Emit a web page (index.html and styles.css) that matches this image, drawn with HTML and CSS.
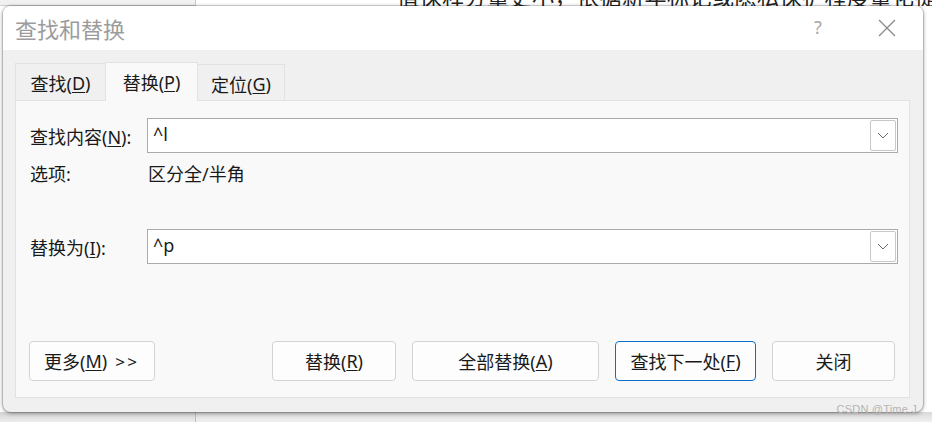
FILE: index.html
```html
<!DOCTYPE html>
<html lang="zh">
<head>
<meta charset="utf-8">
<title>查找和替换</title>
<link rel="stylesheet" href="styles.css">
</head>
<body>
<div class="page">
  <div class="strip top-strip">
    <div class="side"></div>
    <div class="doc"><span class="doc-text">值保释分量更小，依据新年标记或隐私保护程度量化提</span></div>
  </div>
  <div class="dialog">
    <div class="titlebar">
      <div class="title">查找和替换</div>
      <div class="help">?</div>
      <div class="close">
        <svg width="18" height="18" viewBox="0 0 18 18"><path d="M1 1 L17 17 M17 1 L1 17" stroke="#8a8a8a" stroke-width="1.3" fill="none"/></svg>
      </div>
    </div>
    <div class="body">
      <div class="tabs">
        <div class="tab tab-1">查找(<u>D</u>)</div>
        <div class="tab tab-active">替换(<u>P</u>)</div>
        <div class="tab tab-3">定位(<u>G</u>)</div>
      </div>
      <div class="panel">
        <div class="row">
          <div class="label">查找内容(<u>N</u>):</div>
          <div class="combo">
            <div class="combo-text">^l</div>
            <div class="drop">
              <svg width="12" height="7" viewBox="0 0 12 7"><path d="M1 1 L6 6 L11 1" stroke="#6a6a6a" stroke-width="1" fill="none"/></svg>
            </div>
          </div>
        </div>
        <div class="row opt-row">
          <div class="label">选项:</div>
          <div class="opt-val">区分全/半角</div>
        </div>
        <div class="row rep-row">
          <div class="label">替换为(<u>I</u>):</div>
          <div class="combo">
            <div class="combo-text">^p</div>
            <div class="drop">
              <svg width="12" height="7" viewBox="0 0 12 7"><path d="M1 1 L6 6 L11 1" stroke="#6a6a6a" stroke-width="1" fill="none"/></svg>
            </div>
          </div>
        </div>
        <div class="spacer"></div>
        <div class="buttons">
          <button class="btn btn-more">更多(<u>M</u>)<span class="arrows">&gt; &gt;</span></button>
          <div class="btn-group">
            <button class="btn btn-rep">替换(<u>R</u>)</button>
            <button class="btn btn-all">全部替换(<u>A</u>)</button>
            <button class="btn btn-next btn-default">查找下一处(<u>F</u>)</button>
            <button class="btn btn-close">关闭</button>
          </div>
        </div>
      </div>
    </div>
    <div class="watermark">CSDN @Time.J</div>
  </div>
  <div class="strip bottom-strip">
    <div class="side"></div>
    <div class="doc"></div>
  </div>
</div>
</body>
</html>
```
FILE: styles.css
```css
html, body {
  margin: 0;
  padding: 0;
}
body {
  width: 932px;
  height: 422px;
  overflow: hidden;
  background: #ffffff;
  font-family: "Noto Sans", "Noto Sans CJK SC", sans-serif;
  color: #1a1a1a;
}
u {
  text-decoration: underline;
  text-underline-offset: 2px;
  text-decoration-thickness: 1px;
}
.page {
  display: flex;
  flex-direction: column;
  width: 932px;
  height: 422px;
}
.strip {
  display: flex;
  flex: none;
}
.top-strip {
  height: 6px;
  overflow: hidden;
}
.top-strip .side {
  width: 196px;
  background: #f1f1f1;
  border-right: 1px solid #c9c9c9;
  border-bottom: 1px solid #cfcfcf;
  box-sizing: border-box;
}
.top-strip .doc {
  flex: 1;
  background: #fff;
  padding-left: 201px;
  overflow: hidden;
  white-space: nowrap;
}
.doc-text {
  display: block;
  font-family: "Noto Sans CJK SC", sans-serif;
  font-size: 22px;
  line-height: 22px;
  margin-top: -16px;
  color: #222;
  letter-spacing: 0.5px;
}
.bottom-strip {
  height: 10px;
}
.bottom-strip .side {
  width: 196px;
  background: linear-gradient(#d4d4d4, #ececec);
  border-right: 1px solid #bdbdbd;
  box-sizing: border-box;
}
.bottom-strip .doc {
  flex: 1;
  background: linear-gradient(#dadada, #f0f0f0);
}
.dialog {
  position: relative;
  flex: none;
  width: 920px;
  height: 406px;
  margin-left: 3px;
  border-radius: 8px;
  background: #f0f0f0;
  box-shadow: 0 1px 4px rgba(0, 0, 0, 0.45), 0 0 0 1px rgba(0, 0, 0, 0.12);
  display: flex;
  flex-direction: column;
  box-sizing: border-box;
}
.titlebar {
  height: 44px;
  flex: none;
  background: #fff;
  border-radius: 8px 8px 0 0;
  display: flex;
  align-items: center;
}
.title {
  padding-left: 12px;
  font-family: "Noto Sans CJK SC", sans-serif;
  font-size: 22px;
  color: #9c9c9c;
  flex: 1;
  line-height: 1;
  margin-top: -1px;
}
.help {
  font-size: 18px;
  color: #a8a8a8;
  width: 20px;
  text-align: center;
  margin-right: 50px;
  margin-top: -2px;
}
.close {
  width: 18px;
  height: 18px;
  margin-right: 27px;
  display: flex;
}
.body {
  flex: 1;
  display: flex;
  flex-direction: column;
  padding: 12px 13px 14px 12px;
}
.tabs {
  display: flex;
  align-items: flex-end;
  height: 38px;
  flex: none;
}
.tab {
  box-sizing: border-box;
  border: 1px solid #e2e2e2;
  border-bottom: none;
  font-size: 18px;
  display: flex;
  align-items: center;
  justify-content: center;
  background: #f0f0f0;
  margin-bottom: -1px;
}
.tab-1 {
  width: 90px;
  height: 38px;
  border-right: none;
  padding-top: 1px;
}
.tab-active {
  width: 93px;
  height: 39px;
  background: #f9f9f9;
  position: relative;
  z-index: 1;
}
.tab-3 {
  width: 87px;
  height: 37px;
  border-left: none;
  padding-top: 1px;
}
.panel {
  flex: 1;
  background: #f9f9f9;
  border: 1px solid #e2e2e2;
  display: flex;
  flex-direction: column;
  padding: 17px 11px 16px 14px;
}
.row {
  display: flex;
  align-items: center;
  height: 35px;
}
.label {
  width: 117px;
  flex: none;
  font-size: 18px;
}
.combo {
  flex: 1;
  height: 35px;
  box-sizing: border-box;
  border: 1px solid #ababab;
  background: #fff;
  display: flex;
  align-items: center;
  padding: 1px;
}
.combo-text {
  flex: 1;
  padding-left: 4px;
  font-size: 18px;
  line-height: 1;
  margin-top: -4px;
}
.drop {
  width: 26px;
  height: 31px;
  box-sizing: border-box;
  border: 1px solid #c8c8c8;
  border-radius: 2px;
  display: flex;
  align-items: center;
  justify-content: center;
  background: #fff;
}
.opt-row {
  height: 26px;
  margin-top: 7px;
}
.opt-val {
  font-size: 18px;
  padding-left: 1px;
}
.rep-row {
  margin-top: 43px;
}
.spacer {
  flex: 1;
}
.buttons {
  display: flex;
  height: 40px;
  flex: none;
  margin-left: -1px;
  margin-right: 3px;
}
.btn-group {
  margin-left: auto;
  display: flex;
  gap: 16px;
}
.btn {
  box-sizing: border-box;
  height: 40px;
  border: 1px solid #d3d3d3;
  border-radius: 4px;
  background: #fdfdfd;
  font-family: "Noto Sans", "Noto Sans CJK SC", sans-serif;
  font-size: 18px;
  color: #1a1a1a;
  padding: 0;
  display: flex;
  align-items: center;
  justify-content: center;
}
.btn-more {
  width: 126px;
  justify-content: flex-start;
  padding-left: 14px;
}
.arrows {
  margin-left: 8px;
  font-size: 17px;
  word-spacing: -2px;
}
.btn-rep { width: 124px; }
.btn-all { width: 187px; }
.btn-next { width: 141px; }
.btn-close { width: 123px; }
.btn-default {
  border-color: #0a6fc9;
}
.watermark {
  position: absolute;
  right: 6px;
  bottom: -3px;
  font-family: "Liberation Sans", sans-serif;
  font-size: 11px;
  color: #b4b4b4;
  letter-spacing: 0.2px;
}
```
